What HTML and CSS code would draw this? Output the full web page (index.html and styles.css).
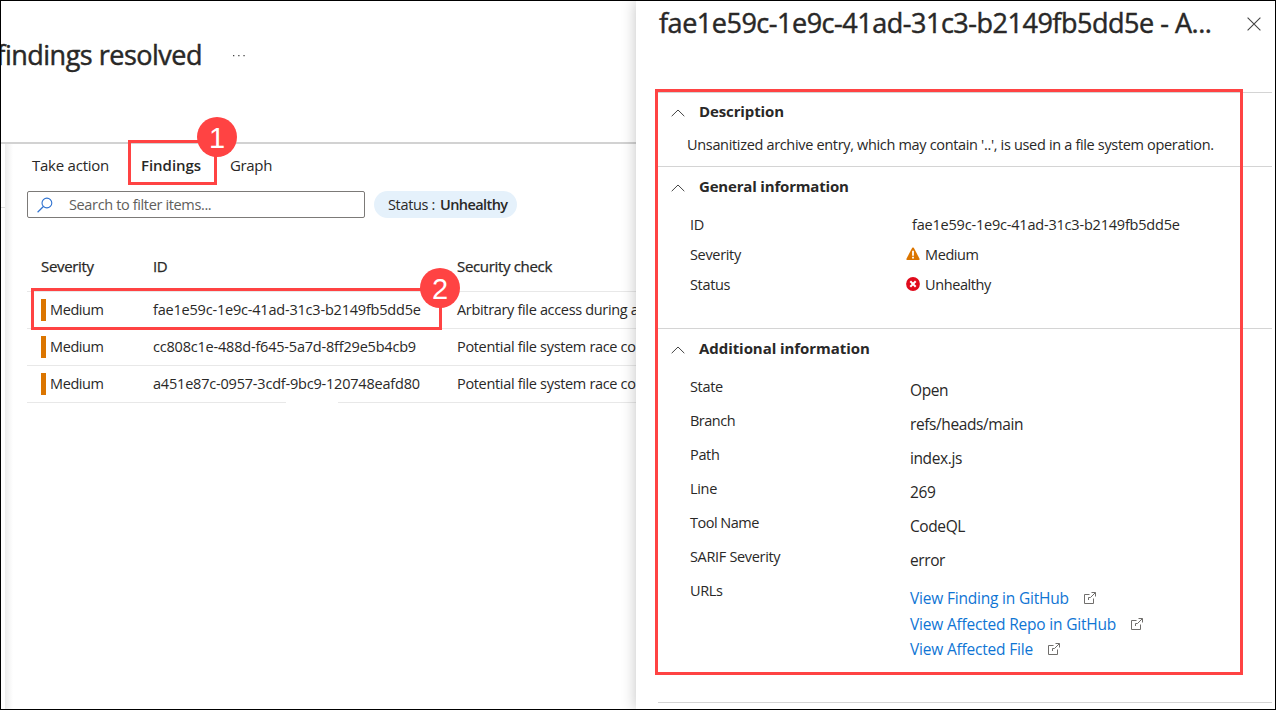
FILE: index.html
```html
<!DOCTYPE html>
<html lang="en">
<head>
<meta charset="utf-8">
<title>Findings resolved</title>
<link rel="stylesheet" href="styles.css">
</head>
<body>
<svg class="defs" aria-hidden="true">
  <symbol id="chevron" viewBox="0 0 14 8"><path d="M.7 7.2 7 1l6.300 6.200" fill="none" stroke="#444" stroke-width="1"/></symbol>
  <symbol id="external" viewBox="0 0 12 12"><path d="M5.500 2.500H.5v9h9v-5M7.500.5h4v4M11.300.7 6.500 5.500H4.500v2.500" fill="none" stroke="#706e6c" stroke-width="1"/></symbol>
</svg>
<div class="screen">
  <main class="main">
    <header class="header">
      <h1 class="title"><span class="title-text">findings resolved</span></h1>
      <svg class="more" width="14" height="4" viewBox="0 0 14 4"><path d="M1 1h1.300v1.300H1zM6.200 1h1.300v1.300H6.200zM11.400 1h1.300v1.300h-1.300z" fill="#444"/></svg>
    </header>
    <div class="body">
      <div class="rail"><div class="rail-line"></div></div>
      <div class="content">
        <nav class="tabs">
          <span class="tab tab-action">Take action</span>
          <span class="tab tab-active">Findings</span>
          <span class="tab tab-graph">Graph</span>
        </nav>
        <div class="filters">
          <div class="search">
            <svg width="16" height="16" viewBox="0 0 16 16"><circle cx="9.900" cy="6" r="4.900" fill="none" stroke="#2f72d0" stroke-width="1.100"/><path d="M6.400 9.500.6 15.200" stroke="#2f72d0" stroke-width="1.200"/></svg>
            <span class="placeholder">Search to filter items...</span>
          </div>
          <div class="pill"><span>Status :</span><b>Unhealthy</b></div>
        </div>
        <div class="table">
          <div class="row head"><span>Severity</span><span>ID</span><span class="check">Security check</span></div>
          <div class="row"><span class="sev">Medium</span><span class="id">fae1e59c-1e9c-41ad-31c3-b2149fb5dd5e</span><span>Arbitrary file access during a</span></div>
          <div class="row"><span class="sev">Medium</span><span class="id">cc808c1e-488d-f645-5a7d-8ff29e5b4cb9</span><span>Potential file system race co</span></div>
          <div class="row"><span class="sev">Medium</span><span class="id">a451e87c-0957-3cdf-9bc9-120748eafd80</span><span>Potential file system race co</span></div>
          <div class="table-end"><i></i><i></i></div>
        </div>
      </div>
    </div>
  </main>
  <aside class="panel">
    <header class="panel-header">
      <h2 class="panel-title">fae1e59c-1e9c-41ad-31c3-b2149fb5dd5e - A...</h2>
      <svg class="close" width="14" height="14" viewBox="0 0 14 14"><path d="M.6.6l12.800 12.800M13.400.6.6 13.400" stroke="#444" stroke-width="1.100"/></svg>
    </header>
    <section class="section description">
      <h3 class="heading"><svg width="14" height="8"><use href="#chevron"/></svg><span class="h-desc">Description</span></h3>
      <p class="text">Unsanitized archive entry, which may contain '..', is used in a file system operation.</p>
    </section>
    <section class="section general">
      <h3 class="heading"><svg width="14" height="8"><use href="#chevron"/></svg><span class="h-gen">General information</span></h3>
      <dl class="facts">
        <dt>ID</dt><dd class="fact-id">fae1e59c-1e9c-41ad-31c3-b2149fb5dd5e</dd>
        <dt>Severity</dt><dd><svg width="14" height="14" viewBox="0 0 14 14"><path d="M6.200.8Q7 0 7.800.8L13.800 12.200 13 13H1L.2 12.200z" fill="#db7500"/><path d="M6.100 3.800h1.800v5H6.100zM6.100 9.800h1.800v1.800H6.100z" fill="#fff"/></svg><span class="medium">Medium</span></dd>
        <dt>Status</dt><dd><svg width="14" height="14" viewBox="0 0 14 14"><circle cx="7" cy="7" r="6.900" fill="#e00b1c"/><path d="m4.300 4.300 5.400 5.400M9.700 4.300 4.300 9.700" stroke="#fff" stroke-width="2"/></svg><span class="unhealthy">Unhealthy</span></dd>
      </dl>
    </section>
    <section class="section additional">
      <h3 class="heading"><svg width="14" height="8"><use href="#chevron"/></svg><span class="h-add">Additional information</span></h3>
      <dl class="details">
        <dt>State</dt><dd>Open</dd>
        <dt class="branch">Branch</dt><dd>refs/heads/main</dd>
        <dt>Path</dt><dd>index.js</dd>
        <dt>Line</dt><dd>269</dd>
        <dt class="tool">Tool Name</dt><dd>CodeQL</dd>
        <dt>SARIF Severity</dt><dd>error</dd>
        <dt>URLs</dt>
        <dd class="links">
          <a>View Finding in GitHub<svg width="12" height="12"><use href="#external"/></svg></a>
          <a>View Affected Repo in GitHub<svg width="12" height="12"><use href="#external"/></svg></a>
          <a>View Affected File<svg width="12" height="12"><use href="#external"/></svg></a>
        </dd>
      </dl>
    </section>
    <div class="section"></div>
  </aside>
  <div class="callout callout-tab"><span class="badge">1</span></div>
  <div class="callout callout-row"><span class="badge">2</span></div>
  <div class="callout callout-panel"></div>
</div>
</body>
</html>
```
FILE: styles.css
```css
* { box-sizing: border-box; }
body { margin: 0; }
h1, h2, h3, p, dl, dd { margin: 0; }
svg { display: block; flex: none; }
.defs { position: absolute; width: 0; height: 0; }

.screen {
  position: relative;
  display: flex;
  width: 1276px;
  height: 710px;
  overflow: hidden;
  border: 1px solid #000;
  background: #fff;
  color: #292827;
  font: 14.5px/20px "Open Sans", "Noto Sans", sans-serif;
  letter-spacing: -.33px;
  white-space: nowrap;
}

/* Left blade */
.main { display: flex; flex-direction: column; width: 635px; overflow: hidden; }
.header {
  display: flex;
  align-items: flex-start;
  height: 143px;
  padding-top: 35px;
  border-bottom: 2px solid #d2d2d2;
}
.title {
  display: flex;
  justify-content: flex-end;
  width: 201px;
  font-size: 27px;
  font-weight: 500;
  line-height: 38px;
  letter-spacing: -.5px;
  -webkit-text-stroke: .45px currentColor;
}
.more { margin: 18px 0 0 30px; }
.body { display: flex; flex: 1; }
.rail { width: 4px; padding-top: 63px; }
.rail-line { height: 1px; background: #ddd; }
.content {
  flex: 1;
  min-width: 0;
  padding: 11px 0 0 22px;
  background: linear-gradient(90deg, #ececec, #fff 8px);
}
.tabs { display: flex; height: 36px; padding-left: 5px; font-size: 15px; letter-spacing: -.24px; }
.tab-active { margin-left: 32px; font-weight: 600; letter-spacing: -.05px; }
.tab-graph { margin-left: 29px; letter-spacing: -.35px; }
.filters { display: flex; gap: 9px; }
.search {
  display: flex;
  align-items: center;
  width: 338px;
  height: 27px;
  padding-left: 9px;
  border: 1px solid #7c7a78;
  border-radius: 2px;
  color: #605e5c;
}
.placeholder { margin-left: 16px; letter-spacing: -.36px; }
.pill {
  display: flex;
  align-items: center;
  gap: 5px;
  width: 143px;
  height: 27px;
  padding-left: 14px;
  border-radius: 14px;
  background: #e5f1fb;
}
.pill b { font-weight: 600; letter-spacing: -.6px; }

.table { margin-top: 24px; }
.row {
  display: grid;
  grid-template-columns: 112px 304px 1fr;
  align-items: center;
  height: 37px;
  padding-left: 14px;
  border-top: 1px solid #e8e8e8;
}
.head {
  height: 49px;
  padding-bottom: 2px;
  border-top: 0;
  font-size: 15px;
  font-weight: 500;
  letter-spacing: -.33px;
  -webkit-text-stroke: .25px currentColor;
}
.sev { display: flex; align-items: center; letter-spacing: -.4px; }
.sev::before { content: ""; width: 5px; height: 22px; margin-right: 4px; background: #db7500; }
.id { letter-spacing: -.2px; }
.table-end { display: flex; justify-content: space-between; }
.table-end i { width: 259px; height: 1px; background: #e8e8e8; }
.table-end i + i { width: 298px; }

/* Details blade */
.panel {
  z-index: 1;
  flex: 1;
  min-width: 0;
  padding: 0 3px 0 22px;
  background: #fff;
  box-shadow: 0 0 14px rgba(0, 0, 0, .24);
}
.panel-header { display: flex; height: 91px; }
.panel-title {
  width: 588px;
  padding: 3px 0 0 1px;
  font-size: 27px;
  font-weight: 500;
  line-height: 38px;
  letter-spacing: -.48px;
  -webkit-text-stroke: .45px currentColor;
}
.close { margin: 16px 0 0 1px; }
.section { border-top: 1px solid #d4d4d4; }
.description { height: 74px; padding-top: 8px; }
.general { height: 162px; padding-top: 9px; }
.additional { height: 374px; padding-top: 9px; }
.heading { display: flex; align-items: center; gap: 14px; height: 20px; padding-left: 13px; font-size: 15px; font-weight: 700; }
.heading svg { margin-top: 3px; }
.h-desc { letter-spacing: -.12px; }
.h-gen { letter-spacing: -.18px; }
.h-add { letter-spacing: -.06px; }
.text { margin: 14px 0 0 29px; }
.facts, .details { display: grid; padding-left: 32px; }
.facts { grid-template-columns: 216px 1fr; grid-auto-rows: 30px; align-items: center; margin-top: 14px; }
.facts dd { display: flex; align-items: center; gap: 5px; }
.facts dd svg { margin-top: -3px; }
.facts .fact-id { padding-left: 6px; letter-spacing: -.2px; }
.medium, .unhealthy { letter-spacing: -.4px; }
.details { grid-template-columns: 220px 1fr; grid-auto-rows: 34px; margin-top: 19px; }
.details dd { padding-top: 3px; font-size: 15.5px; letter-spacing: -.4px; }
.branch, .tool { letter-spacing: -.5px; }
.details .links { display: grid; grid-auto-rows: 25.500px; padding-top: 7px; letter-spacing: -.2px; }
.links a { display: flex; align-items: center; gap: 15px; height: 20px; color: #0f75d4; }

/* Numbered callouts laid over the blades */
.callout { position: absolute; z-index: 2; border: 3px solid #ff4343; }
.callout-tab { left: 127px; top: 139px; width: 89px; height: 45px; }
.callout-row { left: 30px; top: 287px; width: 411px; height: 42px; }
.callout-panel { left: 654px; top: 88px; width: 588px; height: 586px; }
.badge {
  position: absolute;
  top: -26px;
  right: -23px;
  width: 40px;
  height: 40px;
  border-radius: 50%;
  background: #ff4343;
  color: #fff;
  font: 29px/43px "Liberation Sans", sans-serif;
  text-align: center;
}
.callout-row .badge { top: -23px; right: -21px; }
```
